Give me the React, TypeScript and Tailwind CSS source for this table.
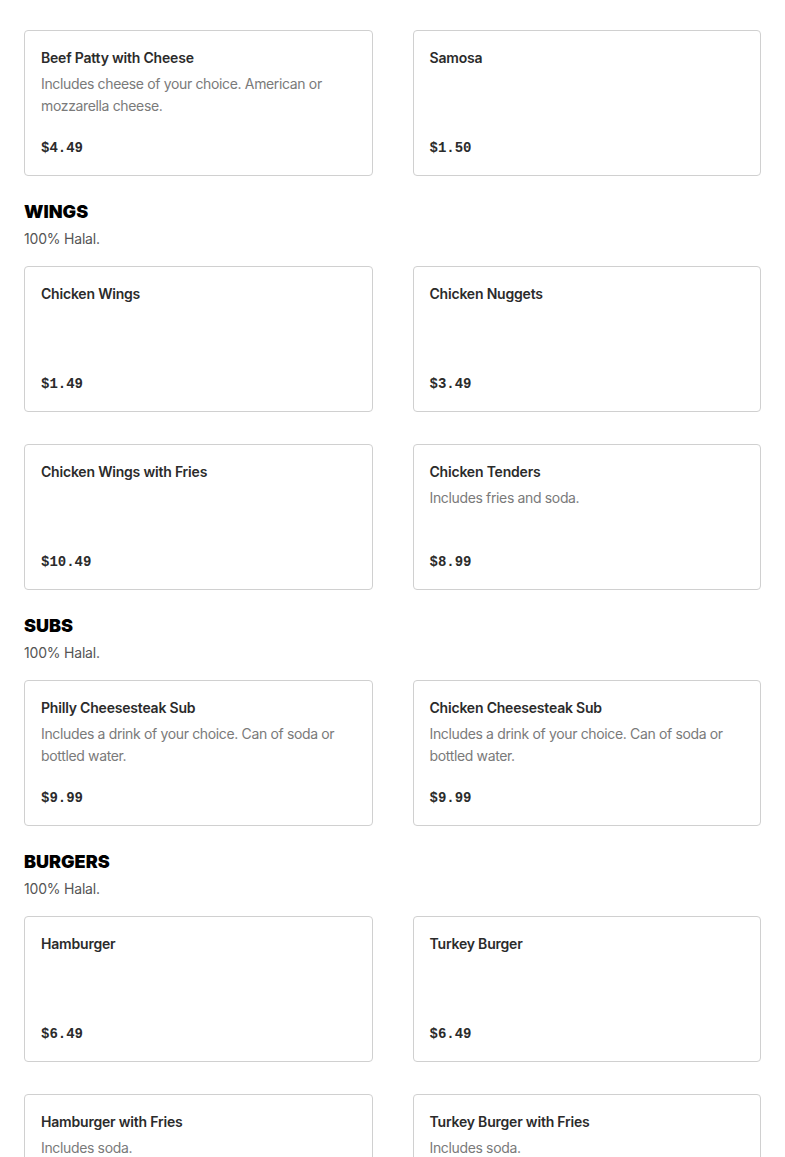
import React from 'react';

interface MenuItem {
  name: string;
  description?: string;
  price: string;
}

interface MenuSection {
  title?: string;
  note?: string;
  items: MenuItem[];
}

const sections: MenuSection[] = [
  {
    items: [
      { name: 'Beef Patty with Cheese', description: 'Includes cheese of your choice. American or mozzarella cheese.', price: '$4.49' },
      { name: 'Samosa', price: '$1.50' },
    ],
  },
  {
    title: 'WINGS',
    note: '100% Halal.',
    items: [
      { name: 'Chicken Wings', price: '$1.49' },
      { name: 'Chicken Nuggets', price: '$3.49' },
      { name: 'Chicken Wings with Fries', price: '$10.49' },
      { name: 'Chicken Tenders', description: 'Includes fries and soda.', price: '$8.99' },
    ],
  },
  {
    title: 'SUBS',
    note: '100% Halal.',
    items: [
      { name: 'Philly Cheesesteak Sub', description: 'Includes a drink of your choice. Can of soda or bottled water.', price: '$9.99' },
      { name: 'Chicken Cheesesteak Sub', description: 'Includes a drink of your choice. Can of soda or bottled water.', price: '$9.99' },
    ],
  },
  {
    title: 'BURGERS',
    note: '100% Halal.',
    items: [
      { name: 'Hamburger', price: '$6.49' },
      { name: 'Turkey Burger', price: '$6.49' },
      { name: 'Hamburger with Fries', description: 'Includes soda.', price: '$8.49' },
      { name: 'Turkey Burger with Fries', description: 'Includes soda.', price: '$8.49' },
    ],
  },
];

const ItemCard: React.FC<{ item: MenuItem }> = ({ item }) => (
  <div className="flex h-[146px] flex-col rounded border border-[#d0d0d0] bg-white px-4 py-4">
    <div className="text-[14px] font-semibold leading-[22px] tracking-[-0.2px] text-[#2b2b2b]">{item.name}</div>
    {item.description && (
      <div className="mt-1 text-[14px] leading-[22px] tracking-[-0.35px] text-[#7a7a7a]">{item.description}</div>
    )}
    <div className="mt-auto pt-px font-['Liberation_Mono',monospace] text-[14px] font-bold leading-[22px] text-[#2b2b2b]">
      {item.price}
    </div>
  </div>
);

export default function App() {
  return (
    <div className="min-h-screen bg-white px-6 pt-[30px] pb-10 font-['Inter',sans-serif]">
      {sections.map((section, i) => (
        <div key={i} className={i > 0 ? 'mt-6' : ''}>
          {section.title && (
            <div className="mb-4">
              <h2 className="text-[18px] font-black leading-6 text-black">{section.title}</h2>
              <p className="mt-1 text-[14px] leading-[22px] tracking-[-0.2px] text-[#555555]">{section.note}</p>
            </div>
          )}
          <div className="grid grid-cols-2 gap-x-10 gap-y-8">
            {section.items.map((item) => (
              <ItemCard key={item.name} item={item} />
            ))}
          </div>
        </div>
      ))}
    </div>
  );
}
